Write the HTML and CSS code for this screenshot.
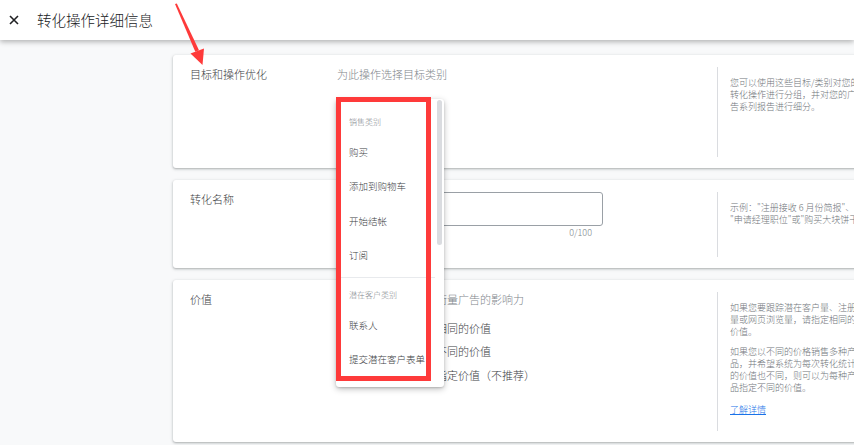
FILE: index.html
```html
<!DOCTYPE html>
<html lang="zh-CN">
<head>
    <meta charset="UTF-8">
    <meta name="viewport" content="width=device-width, initial-scale=1.0">
    <title>转化操作详细信息</title>
    <link rel="stylesheet" href="styles.css">
</head>
<body>
    <div class="top-bar">
        <span class="close-btn">
            <svg width="10" height="10" viewBox="0 0 10 10"><path d="M1 1L9 9M9 1L1 9" stroke="#202124" stroke-width="1.6" fill="none"/></svg>
        </span>
        <h1>转化操作详细信息</h1>
    </div>

    <div class="content">
        <div class="section section-goal">
            <div class="section-label">目标和操作优化</div>
            <div class="section-body">
                <div class="select-field">为此操作选择目标类别</div>

                <div class="dropdown">
                    <div class="annotation-box"></div>
                    <div class="dropdown-scroll"></div>
                    <div class="dropdown-group">销售类别</div>
                    <div class="dropdown-item">购买</div>
                    <div class="dropdown-item">添加到购物车</div>
                    <div class="dropdown-item">开始结帐</div>
                    <div class="dropdown-item">订阅</div>
                    <div class="dropdown-divider"></div>
                    <div class="dropdown-group">潜在客户类别</div>
                    <div class="dropdown-item">联系人</div>
                    <div class="dropdown-item">提交潜在客户表单</div>
                </div>
            </div>
            <div class="section-help">
                <p>您可以使用这些目标/类别对您的转化操作进行分组，并对您的广告系列报告进行细分。</p>
            </div>
        </div>

        <div class="section section-name">
            <div class="section-label">转化名称</div>
            <div class="section-body">
                <div class="text-input"></div>
                <div class="char-count">0/100</div>
            </div>
            <div class="section-help">
                <p class="help-example">示例："注册接收 6 月份简报"、<br>"申请经理职位"或"购买大块饼干"。</p>
            </div>
        </div>

        <div class="section section-value">
            <div class="section-label">价值</div>
            <div class="section-body">
                <div class="field-desc">为转化指定价值，以衡量广告的影响力</div>
                <div class="radio-list">
                    <div class="radio-row"><span class="radio"></span>为每次转化统计相同的价值</div>
                    <div class="radio-row"><span class="radio"></span>为每次转化统计不同的价值</div>
                    <div class="radio-row"><span class="radio"></span>不为此转化操作指定价值（不推荐）</div>
                </div>
            </div>
            <div class="section-help">
                <p>如果您要跟踪潜在客户量、注册量或网页浏览量，请指定相同的价值。</p>
                <p>如果您以不同的价格销售多种产品，并希望系统为每次转化统计的价值也不同，则可以为每种产品指定不同的价值。</p>
                <a href="#" class="help-link">了解详情</a>
            </div>
        </div>
    </div>

    <!-- red annotation arrow -->
    <svg class="annotation-arrow" width="40" height="70" viewBox="0 0 40 70">
        <polygon points="5,4 6.8,3.6 29,50.2 25.3,51.8" fill="#fe3a3a"/>
        <polygon points="20.5,53.5 34,48.5 32.5,65" fill="#fe3a3a"/>
    </svg>
</body>
</html>
```

FILE: styles.css
```css
* {
    margin: 0;
    padding: 0;
    box-sizing: border-box;
}

html, body {
    width: 100%;
    height: 100%;
    overflow: hidden;
}

body {
    font-family: "Noto Sans CJK SC", "Noto Sans", sans-serif;
    font-weight: 300;
    background: #f8f9fa;
    color: #3c4043;
    position: relative;
}

.top-bar {
    height: 40px;
    background: #fff;
    display: flex;
    align-items: center;
    padding-left: 9px;
    box-shadow: 0 2px 5px rgba(0, 0, 0, 0.28);
    position: relative;
    z-index: 2;
}

.close-btn {
    width: 10px;
    height: 10px;
    display: flex;
}

.top-bar h1 {
    font-size: 14.5px;
    font-weight: 300;
    line-height: 20px;
    color: #202124;
    margin-left: 18px;
}

.content {
    padding: 15px 0 0 173px;
    display: flex;
    flex-direction: column;
    gap: 12px;
}

.section {
    width: 710px;
    background: #fff;
    border-radius: 3px;
    box-shadow: 0 1px 2px rgba(60, 64, 67, 0.3), 0 1px 3px 1px rgba(60, 64, 67, 0.1);
    display: flex;
}

.section-goal { height: 113px; }
.section-name { height: 88px; }
.section-value { height: 162px; }

.section-label {
    width: 164px;
    padding: 12px 0 0 17px;
    font-size: 11px;
    line-height: 14px;
    color: #3c4043;
}

.section-body {
    width: 366px;
    margin-right: 14px;
    padding-top: 12px;
    position: relative;
}

.section-help {
    width: 160px;
    margin: 11.5px 0;
    border-left: 1px solid #dadce0;
    padding: 10px 0 0 12px;
    font-size: 9px;
    line-height: 12px;
}

.section-help p {
    width: 134px;
    color: #70757a;
    margin-bottom: 8px;
}

.section-help .help-example {
    white-space: nowrap;
}

.help-link {
    display: block;
    margin-top: 10px;
    color: #1a73e8;
}

.select-field {
    font-size: 11px;
    line-height: 14px;
    color: #80868b;
}

/* dropdown menu */
.dropdown {
    position: absolute;
    left: -1px;
    top: 44px;
    width: 108px;
    padding: 8px 0 10px;
    background: #fff;
    border-radius: 3px;
    box-shadow: 0 2px 6px rgba(0, 0, 0, 0.25), 0 1px 2px rgba(0, 0, 0, 0.15);
    z-index: 5;
}

.dropdown-scroll {
    position: absolute;
    right: 2px;
    top: 1px;
    width: 5px;
    height: 145px;
    border-radius: 3px;
    background: #dadce0;
}

.dropdown-group {
    padding: 8px 0 5.5px 13px;
    font-size: 8px;
    line-height: 14px;
    color: #80868b;
}

.dropdown-item {
    height: 34.5px;
    line-height: 34.5px;
    padding-left: 13px;
    font-size: 9.5px;
    color: #3c4043;
    white-space: nowrap;
}

.dropdown-divider {
    height: 1px;
    background: #e8eaed;
    margin: 4.5px 9px 2px 0;
}

.annotation-box {
    position: absolute;
    left: 0;
    top: -2px;
    width: 95px;
    height: 284px;
    border: 5px solid #fe3a3a;
    z-index: 1;
}

.annotation-arrow {
    position: absolute;
    left: 170px;
    top: 0;
    z-index: 10;
}

/* name field */
.text-input {
    width: 266px;
    height: 34px;
    border: 1px solid #9aa0a6;
    border-radius: 3px;
}

.char-count {
    width: 266px;
    padding-right: 11px;
    margin-top: 1px;
    text-align: right;
    font-size: 9px;
    line-height: 12px;
    color: #80868b;
}

/* value field */
.field-desc {
    font-size: 11px;
    line-height: 14px;
    color: #80868b;
}

.radio-list {
    margin-top: 10px;
}

.radio-row {
    height: 23.5px;
    display: flex;
    align-items: center;
    font-size: 11px;
    color: #3c4043;
    white-space: nowrap;
}

.radio {
    width: 13px;
    height: 13px;
    border: 1.5px solid #5f6368;
    border-radius: 50%;
    margin-right: 9px;
}
```
